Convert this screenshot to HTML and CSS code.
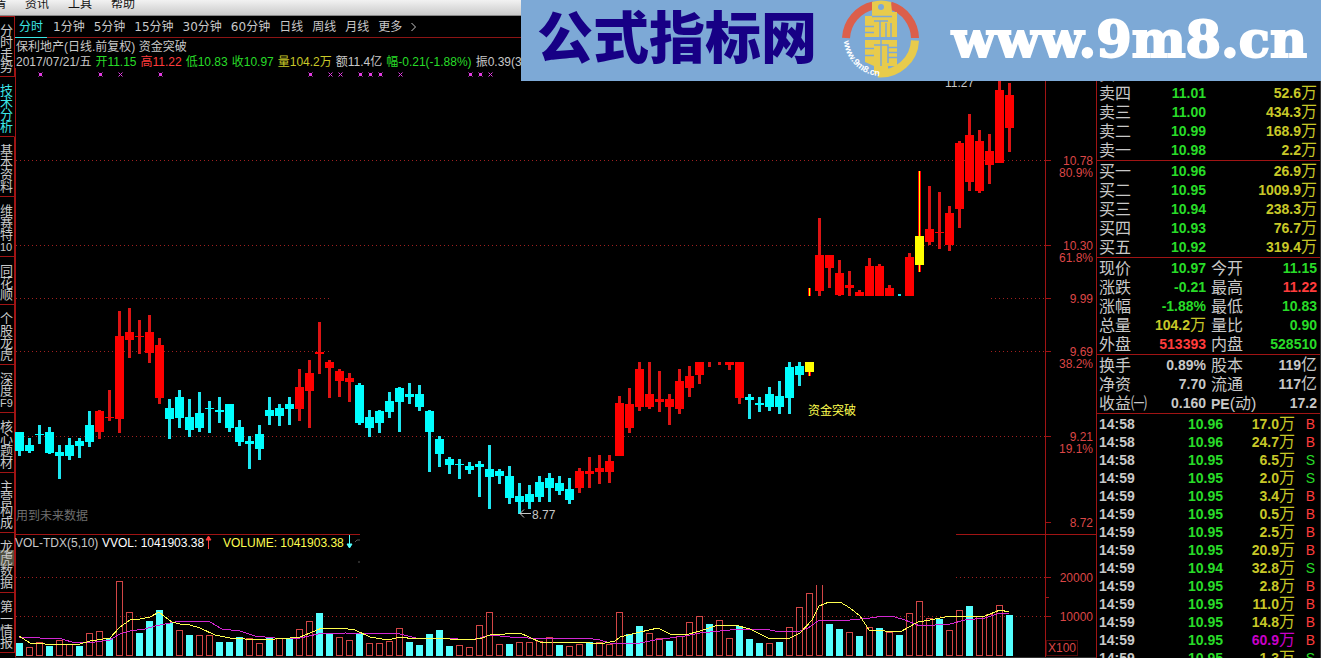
FILE: index.html
```html
<!DOCTYPE html>
<html lang="zh-CN">
<head>
<meta charset="utf-8">
<title>保利地产</title>
<link rel="stylesheet" href="styles.css">
</head>
<body>
<header class="menubar">
  <a href="#">行情</a><a href="#">资讯</a><a href="#">工具</a><a href="#">帮助</a>
</header>

<div class="workspace">
  <nav class="side">
    <a href="#" class="first">分时走势</a>
    <a href="#" class="active">技术分析</a>
    <a href="#">基本资料</a>
    <a href="#">维赛特<span>10</span></a>
    <a href="#">同花顺</a>
    <a href="#">个股龙虎</a>
    <a href="#">深度<span>F9</span></a>
    <a href="#">核心题材</a>
    <a href="#">主营构成</a>
    <a href="#" class="marked">龙虎数据</a>
    <a href="#">第一情报</a>
  </nav>

  <main class="chart">
    <nav class="periods">
      <a href="#" class="active">分时</a><a href="#">1分钟</a><a href="#">5分钟</a><a href="#">15分钟</a><a href="#">30分钟</a><a href="#">60分钟</a><a href="#">日线</a><a href="#">周线</a><a href="#">月线</a><a href="#">更多</a>
      <svg class="chevron" viewBox="0 0 5 10"><path d="M.5 1l4 4-4 4" fill="none" stroke="#c8c8c8"/></svg>
    </nav>
    <h1 class="title">保利地产(日线.前复权) 资金突破</h1>
    <p class="summary">
      <span>2017/07/21/五</span><span class="down">开11.15</span><span class="up">高11.22</span><span class="down">低10.83</span><span class="down">收10.97</span><span class="qty">量104.2万</span><span>额11.4亿</span><span class="down">幅-0.21(-1.88%)</span><span>振0.39(3.49%)</span>
    </p>

    <svg class="plot" viewBox="15 68 1081 590">
      <g id="marks" class="marks"></g>
      <g class="grid">
        <path d="M16 160.5H1045M16 245.5H1045M16 298.5H330M991 298.5h54M16 351.5H330M991 351.5h54M16 436.5H1045"/>
        <path d="M16 577.5H360M956 577.5h89M16 616.5H1045"/>
      </g>
      <g class="axis">
        <path d="M15.5 68V658M1045.5 68V658M16 534.5H360M956 534.5h140"/>
        <path d="M1046 160.5h5M1046 245.5h5M1046 298.5h5M1046 351.5h5M1046 436.5h5M1046 522.5h5M1046 577.5h5M1046 597.5h3M1046 616.5h5"/>
        <path d="M1046.5 640.5h31v15h-31z" stroke-dasharray="1 1"/>
      </g>
      <g id="candles"></g>
      <g id="volumes"></g>
      <polyline class="ma-slow" points="19,637 40,638 62,639 75,643 95,642 110,640 120,634 130,631 145,629 155,626 170,623 180,621 210,622 222,629 240,631 255,636 275,638 300,638 318,634 345,633 400,634 420,639 445,638 470,640 480,638 490,635 510,637 545,639 570,638 585,638 600,640 610,643 640,643 655,640 685,636 700,633 730,630 745,629 765,629 775,631 800,631 808,628 818,621 850,620 870,618 885,616 895,617 905,620 920,626 950,624 965,620 985,618 1000,613 1009,613"/>
      <polyline class="ma-fast" points="19,636 30,643 45,644 80,644 90,641 110,638 120,627 130,620 140,619 150,617 159,612 165,617 172,622 180,624 190,625 200,628 215,635 230,638 260,640 290,638 300,637 310,633 322,628 340,628 355,630 370,637 388,640 400,637 415,639 430,638 450,639 470,640 482,638 490,635 520,633 540,642 552,642 590,643 600,644 615,641 620,637 640,632 658,628 670,634 685,635 700,631 718,625 735,625 750,629 768,638 788,639 800,633 812,620 819,606 829,602 840,602 850,608 860,616 869,630 885,631 900,632 918,622 930,620 945,617 960,616 985,616 1000,610 1009,612"/>
      <g class="scale">
        <text x="1093" y="165">10.78</text><text x="1093" y="177">80.9%</text>
        <text x="1093" y="250">10.30</text><text x="1093" y="262">61.8%</text>
        <text x="1093" y="303">9.99</text>
        <text x="1093" y="356">9.69</text><text x="1093" y="368">38.2%</text>
        <text x="1093" y="441">9.21</text><text x="1093" y="453">19.1%</text>
        <text x="1093" y="527">8.72</text>
        <text x="1093" y="582">20000</text><text x="1093" y="621">10000</text>
        <text x="1076" y="652">X100</text>
      </g>
      <text class="grey" x="945" y="87">11.27</text>
      <path d="M531 513.5H519.500M524 509.500l-4 4 4 4" fill="none" stroke="#c8c8c8"/>
      <text class="grey" x="532" y="519">8.77</text>
      <text class="dim" x="16" y="520">用到未来数据</text>
      <text class="yellow" x="808" y="415">资金突破</text>
      <text class="grey" x="15" y="547">VOL-TDX(5,10)</text>
      <text class="white" x="102" y="547">VVOL: 1041903.38</text>
      <path d="M208.500 549V537M206 540l2.500-4 2.500 4z" fill="#ff3c3c" stroke="#ff3c3c"/>
      <text class="yellow" x="223" y="547">VOLUME: 1041903.38</text>
      <path d="M349.500 535V547M347 544l2.500 4 2.500-4z" fill="#54ffff" stroke="#54ffff"/>
      <path d="M355 542l2-2h3M358 562h2" fill="none" stroke="#555"/>
      <path d="M15 657.500H1096" stroke="#333"/>
    </svg>
  </main>

  <aside class="quotes">
    <table class="book sells">
      <tr><th>卖五</th><td class="down">11.02</td><td class="qty">34.4<i>万</i></td></tr>
      <tr><th>卖四</th><td class="down">11.01</td><td class="qty">52.6<i>万</i></td></tr>
      <tr><th>卖三</th><td class="down">11.00</td><td class="qty">434.3<i>万</i></td></tr>
      <tr><th>卖二</th><td class="down">10.99</td><td class="qty">168.9<i>万</i></td></tr>
      <tr><th>卖一</th><td class="down">10.98</td><td class="qty">2.2<i>万</i></td></tr>
    </table>
    <table class="book buys">
      <tr><th>买一</th><td class="down">10.96</td><td class="qty">26.9<i>万</i></td></tr>
      <tr><th>买二</th><td class="down">10.95</td><td class="qty">1009.9<i>万</i></td></tr>
      <tr><th>买三</th><td class="down">10.94</td><td class="qty">238.3<i>万</i></td></tr>
      <tr><th>买四</th><td class="down">10.93</td><td class="qty">76.7<i>万</i></td></tr>
      <tr><th>买五</th><td class="down">10.92</td><td class="qty">319.4<i>万</i></td></tr>
    </table>
    <table class="facts">
      <tr><th>现价</th><td class="down">10.97</td><th>今开</th><td class="down">11.15</td></tr>
      <tr><th>涨跌</th><td class="down">-0.21</td><th>最高</th><td class="up">11.22</td></tr>
      <tr><th>涨幅</th><td class="down">-1.88%</td><th>最低</th><td class="down">10.83</td></tr>
      <tr><th>总量</th><td class="qty">104.2<i>万</i></td><th>量比</th><td class="down">0.90</td></tr>
      <tr><th>外盘</th><td class="up">513393</td><th>内盘</th><td class="down">528510</td></tr>
    </table>
    <table class="facts ratios">
      <tr><th>换手</th><td>0.89%</td><th>股本</th><td>119<i>亿</i></td></tr>
      <tr><th>净资</th><td>7.70</td><th>流通</th><td>117<i>亿</i></td></tr>
      <tr><th>收益㈠</th><td>0.160</td><th><b>PE</b>(动)</th><td>17.2</td></tr>
    </table>
    <table class="ticks">
      <tr><td>14:58</td><td class="down">10.96</td><td class="qty">17.0<i>万</i></td><td class="up">B</td></tr>
      <tr><td>14:58</td><td class="down">10.96</td><td class="qty">24.7<i>万</i></td><td class="up">B</td></tr>
      <tr><td>14:58</td><td class="down">10.95</td><td class="qty">6.5<i>万</i></td><td class="down">S</td></tr>
      <tr><td>14:59</td><td class="down">10.95</td><td class="qty">2.0<i>万</i></td><td class="down">S</td></tr>
      <tr><td>14:59</td><td class="down">10.95</td><td class="qty">3.4<i>万</i></td><td class="up">B</td></tr>
      <tr><td>14:59</td><td class="down">10.95</td><td class="qty">0.5<i>万</i></td><td class="up">B</td></tr>
      <tr><td>14:59</td><td class="down">10.95</td><td class="qty">2.5<i>万</i></td><td class="up">B</td></tr>
      <tr><td>14:59</td><td class="down">10.95</td><td class="qty">20.9<i>万</i></td><td class="up">B</td></tr>
      <tr><td>14:59</td><td class="down">10.94</td><td class="qty">32.8<i>万</i></td><td class="down">S</td></tr>
      <tr><td>14:59</td><td class="down">10.95</td><td class="qty">2.8<i>万</i></td><td class="up">B</td></tr>
      <tr><td>14:59</td><td class="down">10.95</td><td class="qty">11.0<i>万</i></td><td class="up">B</td></tr>
      <tr><td>14:59</td><td class="down">10.95</td><td class="qty">14.8<i>万</i></td><td class="up">B</td></tr>
      <tr><td>14:59</td><td class="down">10.95</td><td class="big">60.9<i>万</i></td><td class="up">B</td></tr>
      <tr><td>14:59</td><td class="down">10.95</td><td class="qty">1.3<i>万</i></td><td class="down">S</td></tr>
    </table>
  </aside>
</div>

<div class="banner">
  <strong class="brand">公式指标网</strong>
  <svg class="logo" viewBox="0 0 80 80">
    <g fill="none" stroke-width="8">
      <path d="M5 39A35 35 0 0 1 32.500 6.500M49.500 6.500A35 35 0 0 1 74 39" stroke="#dc5f4b"/>
      <path d="M74 41.500A34.500 34.500 0 0 1 37 74.500" stroke="#e8cb4c"/>
    </g>
    <path d="M31 3q9-3 19 0l1 10h5v25H24V17h7z" fill="#e8cb4c"/>
    <path d="M24 41h32v26h-9v8H33v-8l-9-4z" fill="#e8cb4c"/>
    <circle cx="40" cy="8" r="3" fill="#7da9d6"/>
    <g stroke="#7da9d6" stroke-width="1.500" fill="none">
      <path d="M24 27.500h9M24 33.500h9M31 17.500h20M45 24v14M50 24v14M33 22h14M39 22v16M24 49.500h9M24 56.500h9M47 48.500h9M47 53.500h9M47 58.500h9M33 46h14v18M40 41v26"/>
    </g>
    <path id="arc" d="M3 42A38 38 0 0 0 38 77" fill="none"/>
    <text class="logo-text"><textPath href="#arc">www.9m8.cn</textPath></text>
  </svg>
  <strong class="site">www.9m8.cn</strong>
</div>
<script src="chart.js"></script>
</body>
</html>
```
FILE: styles.css
```css
* { box-sizing: border-box; }
html, body { height: 100%; }
body {
  margin: 0;
  position: relative;
  display: flex;
  flex-direction: column;
  overflow: hidden;
  background: #000;
  color: #c8c8c8;
  font-family: "Liberation Sans", "Noto Sans CJK SC", sans-serif;
  font-size: 12px;
}
a { color: inherit; text-decoration: none; }
i { font-style: normal; }

.menubar {
  flex: none;
  display: flex;
  gap: 19px;
  height: 16px;
  margin-left: -18px;
  background: linear-gradient(#f2f2f2, #cacaca);
  border-bottom: 1px solid #888;
  color: #111;
  line-height: 8px;
}

.workspace {
  flex: 1;
  min-height: 0;
  display: grid;
  grid-template-columns: 15px minmax(0, 1fr) 225px;
}

.side { display: flex; flex-direction: column; overflow: hidden; }
.side a {
  flex: none;
  padding: 8px 0 3px;
  border-right: 1px solid #a01414;
  border-bottom: 1px solid #a01414;
  font-size: 13px;
  line-height: 12px;
  word-break: break-all;
}
.side span { font-size: 11px; white-space: nowrap; }
.side .first { border-top: 1px solid #a01414; }
.side .active { color: #3ce6e6; border-right-color: transparent; }
.side .marked {
  background: linear-gradient(rgba(200, 200, 160, .4), rgba(200, 200, 160, .4)) 0 17px / 100% 16px no-repeat;
}

.chart { min-width: 0; overflow: hidden; }
.periods {
  display: flex;
  align-items: stretch;
  gap: 9px;
  height: 22px;
  border-bottom: 1px solid #8c1414;
  font-family: "DejaVu Sans", "Noto Sans CJK SC", sans-serif;
  line-height: 22px;
  white-space: nowrap;
}
.periods .active {
  height: 22px;
  margin-right: -3px;
  padding: 0 4px;
  border-bottom: 1px solid #3ce6e6;
  color: #3ce6e6;
}
.chevron { width: 5px; height: 10px; align-self: center; }
.title, .summary { margin: 0; padding-left: 1px; font-size: 12px; font-weight: 400; white-space: nowrap; }
.title { line-height: 18px; }
.summary { display: flex; gap: 4px; height: 12px; line-height: 12px; }

.up { color: #ff3c3c; }
.down { color: #28dc28; }
.qty { color: #c8c828; }
.big { color: #c800c8; }

.plot { display: block; width: 100%; height: auto; }
.plot text { font-size: 12px; }
.marks { stroke: #e23ce2; }
.grid { stroke: #a02020; stroke-dasharray: 1 3; }
.axis { fill: none; stroke: #a01414; }
.scale { fill: #dc4646; text-anchor: end; }
.grey { fill: #c8c8c8; }
.dim { fill: #6e6e6e; }
.white { fill: #fff; }
.yellow { fill: #ffff50; }
.ma-fast, .ma-slow { fill: none; stroke-width: 1; shape-rendering: crispEdges; }
.ma-fast { stroke: #ffff50; }
.ma-slow { stroke: #d228d2; }
.candle-up, .spike-edge { fill: #f00; }
.candle-down { fill: #0ff; }
.candle-signal { fill: #ff0; }
.wick-up { fill: #dc1414; }
.wick-down { fill: #1ee6f0; }
.vol-up { fill: none; stroke: #d24646; }
.vol-down { fill: #54ffff; }

.quotes {
  overflow: hidden;
  padding-top: 49px;
  border-left: 1px solid #a01414;
  border-right: 1px solid #333;
  font-size: 14px;
  line-height: 19px;
}
.quotes table {
  width: 100%;
  table-layout: fixed;
  border-spacing: 0;
  padding: 1px 3px 0 2px;
  border-top: 1px solid #a01414;
}
.quotes .sells { padding-top: 0; border-top: 0; }
.quotes th, .quotes td { padding: 0; white-space: nowrap; }
.quotes th { text-align: left; font-size: 16px; font-weight: 400; }
.quotes td { text-align: right; font-weight: 700; }
.quotes i { font-size: 16px; font-weight: 400; line-height: 1px; }
.quotes b { font-size: 14px; line-height: 1px; }
.book th { width: 32px; }
.book th + td { width: 75px; }
.facts th:first-child { width: 48px; }
.facts th + td { width: 59px; }
.facts td + th { width: 50px; padding-left: 5px; }
.ratios { padding-bottom: 1px; }
.facts td:last-child { width: auto; }
.quotes .ticks { line-height: 18px; }
.ticks td:nth-child(1) { width: 40px; text-align: left; }
.ticks td:nth-child(2) { width: 84px; }
.ticks td:nth-child(3) { width: 72px; }
.ticks td:nth-child(4) { padding-right: 2px; font-weight: 400; }

.banner {
  position: absolute;
  top: 0;
  right: 0;
  left: 521px;
  height: 81px;
  display: flex;
  align-items: center;
  gap: 24px;
  padding: 0 14px 4px 16px;
  background: #7da9d6;
  white-space: nowrap;
}
.brand { color: #170085; font-size: 56px; font-weight: 900; line-height: 76px; }
.logo { width: 80px; height: 80px; flex: none; }
.logo-text { fill: #fff; font-size: 9px; font-weight: 700; }
.site {
  margin-left: auto;
  color: #fff;
  -webkit-text-stroke: 2px #fff;
  font-family: "DejaVu Serif", serif;
  font-size: 51px;
  line-height: 72px;
}
```
FILE: chart.js
```js
// [kind, high, low, bodyTop, bodyBottom]; a candle with no body lists only its wick
const candles = [
  ['d',432,456,432,451],['d',438,453,445,451],['d',425,444,434,435],['d',427,454,432,453],['d',445,479,452,456],
  ['d',438,460,445,456],['d',438,458,441,446],['d',411,447,425,442],['u',410,439,411,432],['u',390,421,417,418],
  ['u',311,433,336,419],['u',308,358,332,340],['u',320,354,336,337],['u',315,363,332,353],['u',338,404,345,398],
  ['d',399,439,408,419],['d',390,428,397,418],['d',399,437,417,430],['d',392,432,413,428],['d',401,433,408,409],
  ['d',397,423,410,412],['d',404,432,404,428],['d',420,446,427,442],['d',436,469,441,444],['d',425,460,434,449],
  ['d',397,425,410,416],['d',404,426,408,416],['d',397,425,404,409],['u',369,421,387,409],['u',360,428,373,391],
  ['u',322,374,352,354],['u',360,398,362,368],['u',369,397,371,381],['u',373,402,378,382],['d',383,425,385,423],
  ['d',410,437,417,428],['d',410,433,411,423],['d',392,418,401,412],['d',387,432,388,402],['d',383,404,394,397],
  ['d',385,411,394,407],['d',410,472,411,432],['d',436,467,439,454],['d',457,474,459,465],['d',459,479,464,465],
  ['d',462,474,466,470],['d',461,497,464,467],['d',445,509,469,477],['d',469,484,471,476],['d',466,504,476,498],
  ['d',483,514,496,502],['d',485,509,494,502],['d',476,502,482,497],['d',473,502,478,488],['d',476,495,483,491],
  ['d',478,504,489,500],['u',468,493,471,488],['u',457,488,471,474],['u',455,484,468,472],['u',455,483,461,472],
  ['u',396,456,403,456],['u',388,433,404,428],['u',362,411,369,407],['u',362,409,394,407],['u',371,412,399,402],
  ['u',394,425,399,407],['u',369,414,381,409],['u',366,397,376,388],['u',362,384,362,375],['u',362,367],
  ['u',362,365],['u',362,370,362,365],['u',362,404,362,398],['d',394,419,397,400],['d',397,412,403,405],
  ['d',387,411,394,407],['d',381,414,396,407],['d',362,414,367,398],['d',362,386,366,375],['s',362,376,362,372],
  ['u',218,296,255,291],['u',255,288,255,268],['u',260,296,273,295],['u',271,296,285,288],['u',290,296,292,296],
  ['u',258,296,266,296],['u',264,296,266,296],['u',285,296,288,296],['d',294,296],['u',253,296,257,296],
  ['s',171,272,236,265],['u',186,245,229,242],['u',192,249,232,233],['u',206,251,213,245],['u',141,228,143,209],
  ['u',114,191,135,182],['u',130,193,141,191],['u',134,184,151,165],['u',81,163,90,163],['u',83,152,95,128]
];

// top edge of each volume bar; negative values are rising (outlined) bars
const volumes = [
  643,-647,-642,646,-640,-644,646,-633,-631,638,-581,-612,633,621,610,623,-630,635,-635,-635,
  642,642,637,-638,-643,638,-638,639,-629,-621,613,633,-637,-640,633,-643,-643,-641,-628,642,
  645,634,630,646,-645,-647,-625,-612,-644,644,-642,-642,-641,-637,645,-646,-644,642,-642,-644,
  -612,634,626,-633,-638,641,-636,-622,-616,624,-620,-638,626,639,643,-643,642,-627,-607,-593,
  -585,624,629,-632,636,-627,628,-632,635,-613,-601,-618,619,-630,-610,606,-616,-614,-605,615
];

const signals = [40, 100, 120, 160, 310, 330, 340, 360, 370, 380, 400, 470, 480, 490];
const faintSignals = [120, 330, 340, 400, 490];
const floor = 656;

const rect = (cls, x, y, w, h) =>
  `<rect class="${cls}" x="${x}" y="${y}" width="${w}" height="${h}"/>`;

const names = { u: 'up', d: 'down', s: 'signal' };

function wick(kind, x, high, low) {
  if (kind !== 's') return rect('wick-' + names[kind], x + 3, high, 3, low - high);
  return rect('spike-edge', x + 3, high, 3, low - high) + rect('candle-signal', x + 4, high, 1, low - high);
}

document.getElementById('candles').innerHTML = candles.map(([kind, high, low, top, bottom], i) => {
  const x = 15 + i * 10;
  const body = top === undefined ? '' : rect('candle-' + names[kind], x, top, 9, bottom - top);
  return wick(kind, x, high, low) + body;
}).join('') + wick('s', 805, 288, 296);

document.getElementById('volumes').innerHTML = volumes.map((v, i) => {
  const x = 16 + i * 10;
  const top = Math.abs(v);
  if (v > 0) return rect('vol-down', x, top, 7, floor - top);
  if (i === 80) return `<path class="vol-up" d="M${x + .5} ${top}V${floor - .5}h6V${top}"/>`;
  return rect('vol-up', x + .5, top + .5, 6, floor - top - 1);
}).join('');

document.getElementById('marks').innerHTML = signals.map(x => {
  const core = faintSignals.includes(x) ? '' : `<path d="M${x - 1} 74.5h3" stroke-width="3"/>`;
  return `<path d="M${x - 1.5} 72.5l4 4m0-4l-4 4"/>${core}`;
}).join('');
```
